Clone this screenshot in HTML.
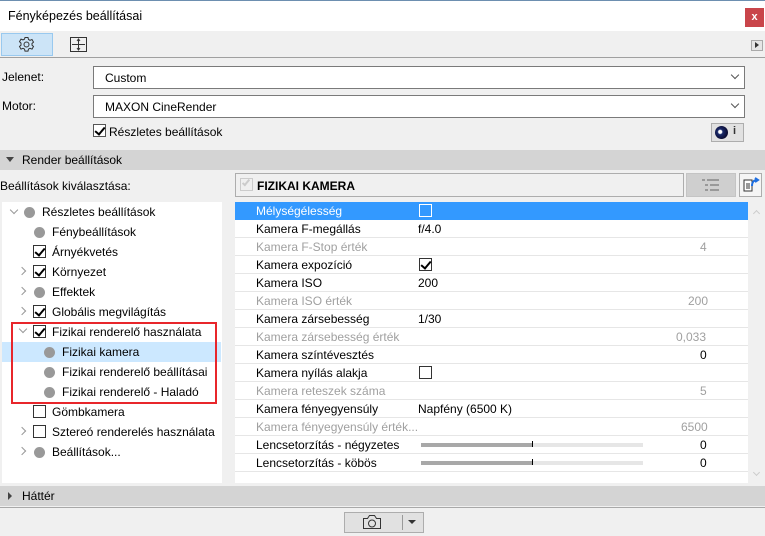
<!DOCTYPE html>
<html><head><meta charset="utf-8"><style>
*{margin:0;padding:0;box-sizing:border-box}
body{width:765px;height:536px;background:#f0f0f0;font-family:"Liberation Sans",sans-serif;font-size:12px;color:#000;position:relative;overflow:hidden}
.a{position:absolute}
.cb{position:absolute;width:13px;height:13px;border:1px solid #333;background:#fff}
.cb.c::after{content:"";position:absolute;left:3px;top:0px;width:4px;height:8px;border:solid #000;border-width:0 2px 2px 0;transform:rotate(40deg)}
.dot{position:absolute;width:11px;height:11px;border-radius:50%;background:#999}
.chev{position:absolute;width:6px;height:6px;border:solid #999;border-width:0 1.5px 1.5px 0}
.row{position:absolute;left:235px;width:513px;height:18px;border-bottom:1px solid #e6e6e6;background:#fff}
.row span{position:absolute;top:2px}
.g{color:#a0a0a0}
</style></head><body>
<div class="a" style="left:0;top:0;width:765px;height:1px;background:#6d8fb0"></div>
<div class="a" style="left:0;top:1px;width:765px;height:30px;background:#fff"></div>
<div class="a" style="left:8px;top:9px;font-size:12.5px">Fényképezés beállításai</div>
<div class="a" style="left:745px;top:8px;width:19px;height:19px;background:#c9454a;color:#fff;font-size:11px;font-weight:bold;text-align:center;line-height:18px">x</div>
<div class="a" style="left:1px;top:33px;width:52px;height:23px;background:#cce4f7;border:1px solid #99c9ef"></div>
<svg class="a" style="left:18px;top:36px" width="17" height="17" viewBox="0 0 17 17"><circle cx="8.5" cy="8.5" r="2.5" fill="none" stroke="#333"/><path d="M7 1.5h3l.5 2 1.5.8 2-.8 1.5 2.6-1.5 1.4v1.6l1.5 1.4-1.5 2.6-2-.8-1.5.8-.5 2h-3l-.5-2-1.5-.8-2 .8-1.5-2.6 1.5-1.4V7.1L1.5 5.7 3 3.1l2 .8 1.5-.8z" fill="none" stroke="#333"/></svg>
<svg class="a" style="left:70px;top:37px" width="18" height="16" viewBox="0 0 18 16"><rect x=".5" y=".5" width="16" height="14" fill="none" stroke="#333"/><path d="M8.5 2v11M2 7.5h13M7 4l1.5-2 1.5 2M7 11l1.5 2 1.5-2" fill="none" stroke="#333"/></svg>
<div class="a" style="left:751px;top:40px;width:12px;height:11px;border:1px solid #aaa;background:#e6e6e6"></div>
<div class="a" style="left:755px;top:42px;width:0;height:0;border-left:4px solid #333;border-top:3.5px solid transparent;border-bottom:3.5px solid transparent"></div>
<div class="a" style="left:0;top:57px;width:765px;height:1px;background:#a0a0a0"></div>
<div class="a" style="left:2px;top:70px">Jelenet:</div>
<div class="a" style="left:93px;top:66px;width:652px;height:23px;background:#fff;border:1px solid #7a7a7a"><span class="a" style="left:11px;top:4px">Custom</span><span class="chev" style="left:638px;top:5px;transform:rotate(45deg);border-color:#555;border-width:0 1px 1px 0"></span></div>
<div class="a" style="left:2px;top:99px">Motor:</div>
<div class="a" style="left:93px;top:95px;width:652px;height:23px;background:#fff;border:1px solid #7a7a7a"><span class="a" style="left:11px;top:4px">MAXON CineRender</span><span class="chev" style="left:638px;top:5px;transform:rotate(45deg);border-color:#555;border-width:0 1px 1px 0"></span></div>
<div class="cb c" style="left:93px;top:124px;border-color:#555"></div>
<div class="a" style="left:109px;top:125px">Részletes beállítások</div>
<div class="a" style="left:711px;top:123px;width:33px;height:19px;border:1px solid #adadad;background:#e1e1e1"></div>
<div class="a" style="left:715px;top:126px;width:13px;height:13px;border-radius:50%;background:radial-gradient(circle at 40% 45%,#fff 0 15%,#1a2a6a 25%,#0a0a30 70%)"></div>
<div class="a" style="left:733px;top:125px;font-weight:bold;font-size:11px;color:#333">i</div>
<div class="a" style="left:0;top:150px;width:765px;height:20px;background:#d4d4d4"></div>
<div class="a" style="left:6px;top:157px;width:0;height:0;border-top:5px solid #444;border-left:4px solid transparent;border-right:4px solid transparent"></div>
<div class="a" style="left:22px;top:153px">Render beállítások</div>
<div class="a" style="left:0;top:179px">Beállítások kiválasztása:</div>
<div class="a" style="left:235px;top:173px;width:449px;height:24px;border:1px solid #adadad;background:#f0f0f0"></div>
<div class="a" style="left:240px;top:178px;width:13px;height:13px;border:1px solid #ccc"></div>
<div class="a" style="left:244px;top:178px;width:4px;height:8px;border:solid #ccc;border-width:0 2px 2px 0;transform:rotate(40deg)"></div>
<div class="a" style="left:257px;top:179px;font-weight:bold">FIZIKAI KAMERA</div>
<div class="a" style="left:686px;top:173px;width:50px;height:24px;background:#cfcfcf;border:1px solid #c4c4c4"></div>
<svg class="a" style="left:702px;top:178px" width="18" height="14"><g fill="#999"><rect x="0" y="1" width="3" height="2"/><rect x="5" y="1" width="12" height="2"/><rect x="3" y="6" width="3" height="2"/><rect x="8" y="6" width="9" height="2"/><rect x="3" y="11" width="3" height="2"/><rect x="8" y="11" width="9" height="2"/></g></svg>
<div class="a" style="left:739px;top:173px;width:23px;height:24px;border:1px solid #adadad;background:#f5f5f5"></div>
<svg class="a" style="left:742px;top:176px" width="18" height="18"><path d="M2 4h8v11H2z" fill="#fff" stroke="#333"/><path d="M4 8h4M4 10h4M4 12h4" stroke="#333"/><path d="M10 10c0-4 2-6 5-6M13 2l3 2-3 2" fill="none" stroke="#1f6fe0" stroke-width="2"/></svg>
<div class="a" style="left:2px;top:202px;width:220px;height:281px;background:#fff"></div>
<div class="a" style="left:2px;top:342px;width:219px;height:20px;background:#cce8ff"></div>
<div class="chev" style="left:11px;top:207px;transform:rotate(45deg)"></div><div class="dot" style="left:24px;top:207px"></div><div class="a" style="left:42px;top:205px">Részletes beállítások</div>
<div class="dot" style="left:34px;top:227px"></div><div class="a" style="left:52px;top:225px">Fénybeállítások</div>
<div class="cb c" style="left:33px;top:245px"></div><div class="a" style="left:52px;top:245px">Árnyékvetés</div>
<div class="chev" style="left:19px;top:268px;transform:rotate(-45deg)"></div><div class="cb c" style="left:33px;top:265px"></div><div class="a" style="left:52px;top:265px">Környezet</div>
<div class="chev" style="left:19px;top:288px;transform:rotate(-45deg)"></div><div class="dot" style="left:34px;top:287px"></div><div class="a" style="left:52px;top:285px">Effektek</div>
<div class="chev" style="left:19px;top:308px;transform:rotate(-45deg)"></div><div class="cb c" style="left:33px;top:305px"></div><div class="a" style="left:52px;top:305px">Globális megvilágítás</div>
<div class="chev" style="left:20px;top:326px;transform:rotate(45deg)"></div><div class="cb c" style="left:33px;top:325px"></div><div class="a" style="left:52px;top:325px">Fizikai renderelő használata</div>
<div class="dot" style="left:44px;top:347px"></div><div class="a" style="left:62px;top:345px">Fizikai kamera</div>
<div class="dot" style="left:44px;top:367px"></div><div class="a" style="left:62px;top:365px">Fizikai renderelő beállításai</div>
<div class="dot" style="left:44px;top:387px"></div><div class="a" style="left:62px;top:385px">Fizikai renderelő - Haladó</div>
<div class="cb" style="left:33px;top:405px"></div><div class="a" style="left:52px;top:405px">Gömbkamera</div>
<div class="chev" style="left:19px;top:428px;transform:rotate(-45deg)"></div><div class="cb" style="left:33px;top:425px"></div><div class="a" style="left:52px;top:425px">Sztereó renderelés használata</div>
<div class="chev" style="left:19px;top:448px;transform:rotate(-45deg)"></div><div class="dot" style="left:34px;top:447px"></div><div class="a" style="left:52px;top:445px">Beállítások...</div>
<div class="a" style="left:11px;top:322px;width:206px;height:82px;border:2px solid #e8262b"></div>
<div class="a" style="left:235px;top:202px;width:513px;height:281px;background:#fff"></div>
<div class="row" style="top:202px;background:#3399ff;color:#fff;border:0"><span style="left:21px">Mélységélesség</span><span style="left:184px;top:2px;width:13px;height:13px;border:1px solid #fff"></span></div>
<div class="row" style="top:220px"><span style="left:21px">Kamera F-megállás</span><span style="left:183px">f/4.0</span></div>
<div class="row g" style="top:238px"><span style="left:21px">Kamera F-Stop érték</span><span style="left:465px">4</span></div>
<div class="row" style="top:256px"><span style="left:21px">Kamera expozíció</span><span class="cb c" style="left:184px;top:2px"></span></div>
<div class="row" style="top:274px"><span style="left:21px">Kamera ISO</span><span style="left:183px">200</span></div>
<div class="row g" style="top:292px"><span style="left:21px">Kamera ISO érték</span><span style="left:453px">200</span></div>
<div class="row" style="top:310px"><span style="left:21px">Kamera zársebesség</span><span style="left:183px">1/30</span></div>
<div class="row g" style="top:328px"><span style="left:21px">Kamera zársebesség érték</span><span style="left:441px">0,033</span></div>
<div class="row" style="top:346px"><span style="left:21px">Kamera színtévesztés</span><span style="left:465px">0</span></div>
<div class="row" style="top:364px"><span style="left:21px">Kamera nyílás alakja</span><span class="cb" style="left:184px;top:2px"></span></div>
<div class="row g" style="top:382px"><span style="left:21px">Kamera reteszek száma</span><span style="left:465px">5</span></div>
<div class="row" style="top:400px"><span style="left:21px">Kamera fényegyensúly</span><span style="left:183px">Napfény (6500 K)</span></div>
<div class="row g" style="top:418px"><span style="left:21px">Kamera fényegyensúly érték...</span><span style="left:446px">6500</span></div>
<div class="row" style="top:436px"><span style="left:21px">Lencsetorzítás - négyzetes</span><span style="left:186px;top:7px;width:222px;height:4px;background:#e6e6e6"></span><span style="left:186px;top:7px;width:111px;height:4px;background:#a8a8a8"></span><span style="left:297px;top:5px;width:1px;height:6px;background:#000"></span><span style="left:465px">0</span></div>
<div class="row" style="top:454px"><span style="left:21px">Lencsetorzítás - köbös</span><span style="left:186px;top:7px;width:222px;height:4px;background:#e6e6e6"></span><span style="left:186px;top:7px;width:111px;height:4px;background:#a8a8a8"></span><span style="left:297px;top:5px;width:1px;height:6px;background:#000"></span><span style="left:465px">0</span></div>
<div class="a" style="left:748px;top:202px;width:15px;height:281px;background:#f0f0f0"></div>
<div class="a" style="left:754px;top:211px;width:5px;height:5px;border:solid #ccc;border-width:1.5px 0 0 1.5px;transform:rotate(45deg)"></div>
<div class="a" style="left:754px;top:470px;width:5px;height:5px;border:solid #ccc;border-width:0 1.5px 1.5px 0;transform:rotate(45deg)"></div>
<div class="a" style="left:0;top:486px;width:765px;height:20px;background:#d4d4d4"></div>
<div class="a" style="left:8px;top:492px;width:0;height:0;border-left:4px solid #444;border-top:4px solid transparent;border-bottom:4px solid transparent"></div>
<div class="a" style="left:22px;top:489px">Háttér</div>
<div class="a" style="left:0;top:507px;width:765px;height:1px;background:#a8a8a8"></div>
<div class="a" style="left:344px;top:512px;width:80px;height:21px;border:1px solid #adadad;background:#e1e1e1"></div>
<div class="a" style="left:402px;top:515px;width:1px;height:15px;background:#999"></div>
<div class="a" style="left:408px;top:520px;width:0;height:0;border-top:4px solid #333;border-left:4px solid transparent;border-right:4px solid transparent"></div>
<svg class="a" style="left:362px;top:514px" width="20" height="16"><path d="M1.5 4.5h4l2-3h5l2 3h4v10h-17z" fill="none" stroke="#333"/><circle cx="10" cy="9.5" r="3.5" fill="none" stroke="#333"/></svg>
</body></html>
